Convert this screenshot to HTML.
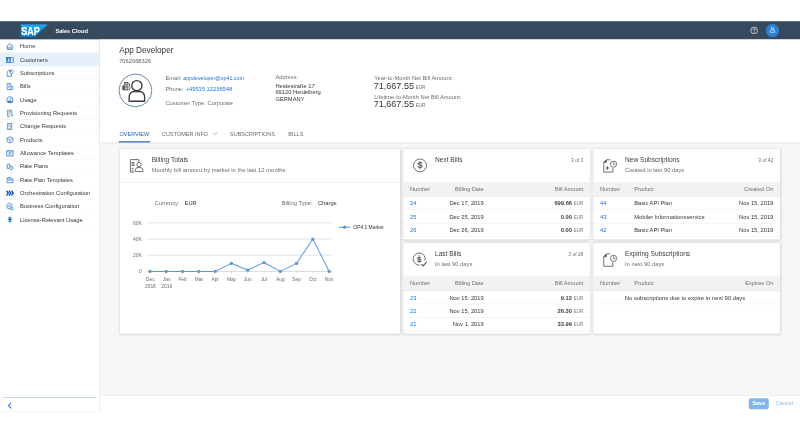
<!DOCTYPE html>
<html>
<head>
<meta charset="utf-8">
<title>SAP Sales Cloud - Customers</title>
<style>
html,body{margin:0;padding:0;background:#fff;}
body{width:800px;height:433px;overflow:hidden;position:relative;font-family:"Liberation Sans",sans-serif;}
#app{position:absolute;left:0;top:0;width:1920px;height:1040px;transform:scale(0.4166667);transform-origin:0 0;filter:grayscale(0);background:#fff;color:#32363a;font-size:13.8px;}
#app *{box-sizing:border-box;}
.abs{position:absolute;white-space:nowrap;}
/* shell */
#shell{position:absolute;left:0;top:51px;width:1920px;height:44px;background:#354a5f;}
#shell .title{position:absolute;left:133px;top:2px;height:44px;line-height:44px;color:#fff;font-weight:bold;font-size:13.6px;}
/* side nav */
#side{position:absolute;left:0;top:95px;width:240px;height:893px;background:#fff;border-right:1px solid #d9d9d9;border-bottom:1px solid #e2e2e2;}
#side .it{position:relative;height:32px;line-height:34.6px;padding-left:48px;font-size:13.8px;color:#32363a;border-bottom:1px solid #f1f1f1;white-space:nowrap;}
#side .it.sel{background:#e5f0fa;}
#side .it svg{position:absolute;left:14.2px;top:6.5px;width:19.5px;height:19.5px;}
#side .sep{position:absolute;left:7px;width:224px;top:858.6px;height:1.3px;background:#6b9cd6;}
/* main */
#main{position:absolute;left:240px;top:95px;width:1680px;height:853px;background:#f7f7f7;}
#ophead{position:absolute;left:0;top:0;width:1680px;height:247px;background:#fff;box-shadow:0 1px 3px rgba(0,0,0,0.12);}
.lbl{color:#6a6d70;}
.lnk{color:#1a74d4;}
.tab{position:absolute;top:219.3px;font-size:13.2px;color:#6a6d70;white-space:nowrap;line-height:16px;}
.tab.on{color:#1c62b0;}
.card{position:absolute;background:#fff;border-radius:4px;box-shadow:0 0 0 1px rgba(0,0,0,0.06),0 2px 7px rgba(0,0,0,0.12);overflow:hidden;}
.card .ttl{position:absolute;left:76px;top:15.5px;font-size:15.8px;line-height:19px;color:#393d41;white-space:nowrap;}
.card .sub{position:absolute;left:76px;top:43px;font-size:13.9px;line-height:16px;color:#6a6d70;white-space:nowrap;}
.card .cnt{position:absolute;right:16px;top:20px;font-size:11.8px;line-height:14px;color:#6a6d70;white-space:nowrap;}
.card .ico{position:absolute;left:16px;top:16px;width:48px;height:48px;}
.card .hline{position:absolute;left:0;right:0;top:80px;height:1px;background:#e5e5e5;}
.th{position:absolute;left:0;right:0;top:80px;height:35px;background:#f2f2f2;border-bottom:1px solid #e0e0e0;color:#6a6d70;font-size:13.6px;line-height:36px;}
.tr{position:absolute;left:0;right:0;height:32px;border-bottom:1px solid #e8e8e8;line-height:33.4px;font-size:13.85px;color:#32363a;}
.c{position:absolute;top:0;white-space:nowrap;}
.cur{font-size:11px;color:#74777a;font-weight:normal;}
.b{font-weight:bold;color:#3c3f43;}
#foot{position:absolute;left:240px;top:948px;width:1680px;height:40px;background:#fff;border-top:1px solid #d9d9d9;}
</style>
</head>
<body>
<div id="app">

<!-- SHELL HEADER -->
<div id="shell">
  <svg class="abs" style="left:49px;top:6.5px" width="66" height="32" viewBox="0 0 66 32">
    <defs><linearGradient id="sapg" x1="0" y1="0" x2="0" y2="1"><stop offset="0" stop-color="#1fb0ee"/><stop offset="1" stop-color="#0b78cf"/></linearGradient></defs><polygon points="0,0 66,0 34,31 0,31" fill="url(#sapg)"/>
    <text x="1.8" y="27" font-family="Liberation Sans, sans-serif" font-weight="bold" font-size="28" fill="#fff" textLength="44.5" lengthAdjust="spacingAndGlyphs" stroke="#fff" stroke-width="0.6">SAP</text>
  </svg>
  <div class="title">Sales Cloud</div>
  <!-- help -->
  <svg class="abs" style="left:1800px;top:12px" width="20" height="20" viewBox="0 0 20 20">
    <circle cx="10" cy="10" r="8" fill="none" stroke="#fff" stroke-width="1.6"/>
    <path d="M7.4 8.2 a2.6 2.6 0 1 1 3.6 2.3 c-0.8 0.4 -1 0.8 -1 1.7" fill="none" stroke="#fff" stroke-width="1.6"/>
    <circle cx="10" cy="14.4" r="1" fill="#fff"/>
  </svg>
  <!-- avatar -->
  <div class="abs" style="left:1838px;top:6px;width:32px;height:32px;border-radius:16px;background:#2b7fd6;"></div>
  <svg class="abs" style="left:1846px;top:12px" width="16" height="17" viewBox="0 0 18 19">
    <circle cx="9" cy="5.2" r="3.6" fill="none" stroke="#fff" stroke-width="1.7"/>
    <path d="M2.6 16.2 v-2.4 a4 4 0 0 1 4 -4 h4.8 a4 4 0 0 1 4 4 v2.4 z" fill="none" stroke="#fff" stroke-width="1.7" stroke-linejoin="round"/>
  </svg>
</div>

<!-- SIDE NAV -->
<div id="side">
  <div class="it"><svg viewBox="0 0 18 18"><path d="M1.5 9 L9 2.5 L16.5 9 M3.8 8 V15.3 H14.2 V8" fill="none" stroke="#3077c9" stroke-width="1.8" stroke-linejoin="round"/><path d="M6.5 15 v-3 a2.5 2.5 0 0 1 5 0 v3" fill="none" stroke="#3077c9" stroke-width="1.5"/></svg>Home</div>
  <div class="it sel"><svg viewBox="0 0 18 18"><rect x="1.5" y="3.5" width="15" height="11" fill="#fff" stroke="#3077c9" stroke-width="1.6"/><rect x="1.5" y="3.5" width="9.5" height="11" fill="#3077c9"/><circle cx="6.2" cy="7.6" r="1.7" fill="#fff"/><path d="M3.4 12.6 a2.9 2.9 0 0 1 5.8 0 z" fill="#fff"/><path d="M12.3 7.5 h2.8 M12.3 10.5 h2.8" stroke="#3077c9" stroke-width="1.3"/></svg>Customers</div>
  <div class="it"><svg viewBox="0 0 18 18"><path d="M3 6 V16 H12.5 V9 M3 6 L6.5 2.5 H9" fill="none" stroke="#3077c9" stroke-width="1.6" stroke-linejoin="round"/><circle cx="12.3" cy="5.8" r="4" fill="#fff" stroke="#3077c9" stroke-width="1.5"/><path d="M12.3 5.8 V1.8 A4 4 0 0 0 8.3 5.8 Z" fill="#3077c9"/></svg>Subscriptions</div>
  <div class="it"><svg viewBox="0 0 18 18"><path d="M3 2 H11 V16 H3 Z" fill="none" stroke="#3077c9" stroke-width="1.6"/><path d="M5 5.5 h4 M5 8.5 h4 M5 11.5 h3" stroke="#3077c9" stroke-width="1.3"/><path d="M11 9 h4.5 v7 h-8" fill="none" stroke="#3077c9" stroke-width="1.6"/></svg>Bills</div>
  <div class="it"><svg viewBox="0 0 18 18"><circle cx="9" cy="9" r="7" fill="none" stroke="#3077c9" stroke-width="1.7"/><path d="M9 10 L11.5 4.5" stroke="#3077c9" stroke-width="1.7"/><path d="M2.6 11 a6.8 6.8 0 0 0 12.8 0 z" fill="#3077c9"/></svg>Usage</div>
  <div class="it"><svg viewBox="0 0 18 18"><path d="M4 2 H13 V10 M9 16 H4 V2" fill="none" stroke="#3077c9" stroke-width="1.7"/><path d="M6 5.5 h5 M6 8.5 h5 M6 11.5 h3" stroke="#3077c9" stroke-width="1.3"/><path d="M10.5 13.5 h5 M13.5 11 l2.3 2.5 l-2.3 2.5" fill="none" stroke="#3077c9" stroke-width="1.5"/></svg>Provisioning Requests</div>
  <div class="it"><svg viewBox="0 0 18 18"><path d="M4 2 H13 V16 H4 Z" fill="none" stroke="#3077c9" stroke-width="1.7"/><path d="M6 5.5 h5 M6 8.5 h5" stroke="#3077c9" stroke-width="1.3"/><path d="M6.5 12.5 l1.8 1.8 l3.2 -3.6" fill="none" stroke="#3077c9" stroke-width="1.5"/></svg>Change Requests</div>
  <div class="it"><svg viewBox="0 0 18 18"><path d="M9 2 L15.5 5.5 V12.5 L9 16 L2.5 12.5 V5.5 Z" fill="none" stroke="#3077c9" stroke-width="1.7" stroke-linejoin="round"/><path d="M2.5 5.5 L9 9 L15.5 5.5 M9 9 V16" fill="none" stroke="#3077c9" stroke-width="1.4"/></svg>Products</div>
  <div class="it"><svg viewBox="0 0 18 18"><rect x="2" y="3.5" width="14" height="11.5" fill="none" stroke="#3077c9" stroke-width="1.7"/><path d="M6 12 l3 -5 l3 5 M7 10.4 h4" fill="none" stroke="#3077c9" stroke-width="1.4"/><path d="M2 6 h14" stroke="#3077c9" stroke-width="1.2"/></svg>Allowance Templates</div>
  <div class="it"><svg viewBox="0 0 18 18"><path d="M3 4 H9 V9 M3 4 V13 H7" fill="none" stroke="#3077c9" stroke-width="1.7"/><circle cx="11.5" cy="12" r="4" fill="none" stroke="#3077c9" stroke-width="1.6"/><path d="M11.5 10 v2.2 h1.8" fill="none" stroke="#3077c9" stroke-width="1.2"/></svg>Rate Plans</div>
  <div class="it"><svg viewBox="0 0 18 18"><path d="M2.5 7 H15.5 V15.5 H2.5 Z" fill="none" stroke="#3077c9" stroke-width="1.7"/><path d="M4 7 V3.5 H11 L14 7" fill="none" stroke="#3077c9" stroke-width="1.6"/><path d="M5 10 h8" stroke="#3077c9" stroke-width="1.3"/></svg>Rate Plan Templates</div>
  <div class="it"><svg viewBox="0 0 18 18"><path d="M1.5 3.5 l4 5.5 l-4 5.5 M7 3.5 l4 5.5 l-4 5.5 M12.5 3.5 l4 5.5 l-4 5.5" fill="none" stroke="#0f56ad" stroke-width="3"/></svg>Orchestration Configuration</div>
  <div class="it"><svg viewBox="0 0 18 18"><circle cx="8" cy="8" r="6" fill="none" stroke="#3077c9" stroke-width="1.7"/><circle cx="8" cy="8" r="2" fill="none" stroke="#3077c9" stroke-width="1.4"/><path d="M10 12 h6 v4.5 h-6 z" fill="#fff" stroke="#3077c9" stroke-width="1.4"/></svg>Business Configuration</div>
  <div class="it"><svg viewBox="0 0 18 18"><path d="M9 1.5 V16.5 M5 4 h8 M4 8 h10 M5 12 h8" stroke="#3077c9" stroke-width="1.7"/><circle cx="9" cy="8" r="3" fill="#3077c9"/></svg>License-Relevant Usage</div>
  <div class="sep"></div>
  <svg class="abs" style="left:16px;top:868px" width="16" height="20" viewBox="0 0 16 20"><path d="M11 3 L4.5 10 L11 17" fill="none" stroke="#3077c9" stroke-width="2.6"/></svg>
</div>

<!-- MAIN -->
<div id="main">
  <div id="ophead">
    <div class="abs" style="left:46px;top:12.5px;font-size:19.7px;line-height:24px;color:#32363a;">App Developer</div>
    <div class="abs" style="left:46px;top:43px;font-size:13.8px;line-height:16px;color:#55585b;">7062068326</div>
    <!-- avatar -->
    <svg class="abs" style="left:43.5px;top:81px;overflow:visible" width="82" height="82" viewBox="-1 -1 82 82">
      <circle cx="40" cy="40" r="39.3" fill="#fff" stroke="#56789a" stroke-width="2.1"/>
      <circle cx="43.4" cy="28.6" r="12.2" fill="none" stroke="#3a3a3a" stroke-width="3.2"/>
      <path d="M25 66 V54.5 a12 12 0 0 1 12 -12 h13 a12 12 0 0 1 12 12 V66 Z" fill="#fff" stroke="#3a3a3a" stroke-width="3.2" stroke-linejoin="round"/>
      <rect x="14" y="21" width="8" height="18" fill="#c4c4c4" stroke="#4a4a4a" stroke-width="1.8"/>
      <rect x="8.4" y="28" width="5.6" height="11.4" fill="#5a5a5a"/>
      <path d="M16 25 h4 M16 29 h4 M16 33 h4" stroke="#4a4a4a" stroke-width="1.6"/>
      <path d="M24.5 22 q3.5 9 1.5 17.5" fill="none" stroke="#4a4a4a" stroke-width="2"/>
    </svg>
    <div class="abs lbl" style="left:157px;top:85px;line-height:16px;">Email: <span class="lnk" style="font-size:12.7px;margin-left:0.5px">appdeveloper@op41.com</span></div>
    <div class="abs lbl" style="left:157px;top:111px;line-height:16px;">Phone: <span class="lnk" style="margin-left:1px">+49515 12236548</span></div>
    <div class="abs lbl" style="left:157px;top:144px;line-height:16px;">Customer Type: Corporate</div>

    <div class="abs lbl" style="left:421px;top:83px;line-height:16px;">Address:</div>
    <div class="abs" style="left:421px;top:103.2px;line-height:16px;color:#32363a;">Heidestraße 17<br>69120 Heidelberg<br>GERMANY</div>

    <div class="abs lbl" style="left:658px;top:85px;line-height:16px;">Year-to-Month Net Bill Amount:</div>
    <div class="abs" style="left:657px;top:98.6px;line-height:26px;font-size:21.7px;color:#32363a;">71,667.55 <span style="font-size:11px;color:#6a6d70;margin-left:-2px">EUR</span></div>
    <div class="abs lbl" style="left:658px;top:129.5px;line-height:16px;">Lifetime-to-Month Net Bill Amount:</div>
    <div class="abs" style="left:657px;top:141.7px;line-height:26px;font-size:21.7px;color:#32363a;">71,667.55 <span style="font-size:11px;color:#6a6d70;margin-left:-2px">EUR</span></div>

    <div class="tab on" style="left:47px;">OVERVIEW</div>
    <div class="abs" style="left:45px;top:244.3px;width:75px;height:2.8px;background:#2a6cb8;"></div>
    <div class="tab" style="left:149px;">CUSTOMER INFO</div>
    <svg class="abs" style="left:271px;top:221px" width="12" height="10" viewBox="0 0 12 10"><path d="M1.5 2.5 L6 7 L10.5 2.5" fill="none" stroke="#6a6d70" stroke-width="1.4"/></svg>
    <div class="tab" style="left:312px;">SUBSCRIPTIONS</div>
    <div class="tab" style="left:452px;">BILLS</div>
  </div>

  <!-- CARD 1 : Billing Totals -->
  <div class="card" style="left:48px;top:262px;width:672px;height:444px;">
    <svg class="ico" viewBox="0 0 48 48">
      <path d="M9 10 H29 V16 M9 10 V40 H18.5" fill="none" stroke="#555" stroke-width="2"/>
      <text x="11" y="25" font-family="Liberation Sans, sans-serif" font-size="15" fill="#555" font-weight="bold">$</text>
      <path d="M11.8 31.5 h5 M11.8 36 h4.5" stroke="#555" stroke-width="1.9"/>
      <circle cx="29.8" cy="21.8" r="5.2" fill="#fff" stroke="#555" stroke-width="2"/>
      <path d="M21 38.8 v-3.6 a6.2 6.2 0 0 1 6.2 -6.2 h5.4 a6.2 6.2 0 0 1 6.2 6.2 v3.6 z" fill="#fff" stroke="#555" stroke-width="2" stroke-linejoin="round"/>
    </svg>
    <div class="ttl">Billing Totals</div>
    <div class="sub" style="font-size:14.1px">Monthly bill amount by market in the last 12 months</div>
    <div class="hline"></div>

    <div class="abs lbl" style="left:83px;top:123px;line-height:16px;">Currency:</div>
    <div class="abs" style="left:155px;top:123px;line-height:16px;">EUR</div>
    <div class="abs lbl" style="left:388px;top:123px;line-height:16px;">Billing Type:</div>
    <div class="abs" style="left:475px;top:123px;line-height:16px;">Charge</div>

    <svg class="abs" style="left:0;top:155.2px" width="672" height="288" viewBox="0 0 672 288">
      <g stroke="#c6ced8" stroke-width="1.3">
      <line x1="64.5" y1="22.8" x2="509" y2="22.8"/>
      <line x1="64.5" y1="61.7" x2="509" y2="61.7"/>
      <line x1="64.5" y1="100.5" x2="509" y2="100.5"/>
      <line x1="64.5" y1="139.4" x2="509" y2="139.4" stroke="#b3bcc6"/>
      </g>
      <g font-family="Liberation Sans, sans-serif" font-size="11.8" fill="#6a6d70" text-anchor="end">
      <text x="52" y="27.0">60K</text>
      <text x="52" y="65.9">40K</text>
      <text x="52" y="104.7">20K</text>
      <text x="52" y="143.6">0</text>
      </g>
      <g stroke="#b3bcc6" stroke-width="1">
      <line x1="72.0" y1="139.4" x2="72.0" y2="144.4"/>
      <line x1="111.1" y1="139.4" x2="111.1" y2="144.4"/>
      <line x1="150.2" y1="139.4" x2="150.2" y2="144.4"/>
      <line x1="189.3" y1="139.4" x2="189.3" y2="144.4"/>
      <line x1="228.4" y1="139.4" x2="228.4" y2="144.4"/>
      <line x1="267.5" y1="139.4" x2="267.5" y2="144.4"/>
      <line x1="306.5" y1="139.4" x2="306.5" y2="144.4"/>
      <line x1="345.6" y1="139.4" x2="345.6" y2="144.4"/>
      <line x1="384.7" y1="139.4" x2="384.7" y2="144.4"/>
      <line x1="423.8" y1="139.4" x2="423.8" y2="144.4"/>
      <line x1="462.9" y1="139.4" x2="462.9" y2="144.4"/>
      <line x1="502.0" y1="139.4" x2="502.0" y2="144.4"/>
      </g>
      <polyline fill="none" stroke="#5899da" stroke-width="2.4" stroke-linejoin="round" points="72.0,139.4 111.1,139.4 150.2,139.4 189.3,139.4 228.4,139.4 267.5,120.0 306.5,136.5 345.6,118.0 384.7,139.4 423.8,120.0 462.9,61.7 502.0,139.4"/>
      <g fill="#5899da"><circle cx="72.0" cy="139.4" r="3.9"/><circle cx="111.1" cy="139.4" r="3.9"/><circle cx="150.2" cy="139.4" r="3.9"/><circle cx="189.3" cy="139.4" r="3.9"/><circle cx="228.4" cy="139.4" r="3.9"/><circle cx="267.5" cy="120.0" r="3.9"/><circle cx="306.5" cy="136.5" r="3.9"/><circle cx="345.6" cy="118.0" r="3.9"/><circle cx="384.7" cy="139.4" r="3.9"/><circle cx="423.8" cy="120.0" r="3.9"/><circle cx="462.9" cy="61.7" r="3.9"/><circle cx="502.0" cy="139.4" r="3.9"/></g>
      <g font-family="Liberation Sans, sans-serif" font-size="11.6" fill="#6a6d70" text-anchor="middle">
      <text x="73.0" y="162.3">Dec</text>
      <text x="112.1" y="162.3">Jan</text>
      <text x="150.2" y="162.3">Feb</text>
      <text x="189.3" y="162.3">Mar</text>
      <text x="228.4" y="162.3">Apr</text>
      <text x="267.5" y="162.3">May</text>
      <text x="306.5" y="162.3">Jun</text>
      <text x="345.6" y="162.3">Jul</text>
      <text x="384.7" y="162.3">Aug</text>
      <text x="423.8" y="162.3">Sep</text>
      <text x="462.9" y="162.3">Oct</text>
      <text x="502.0" y="162.3">Nov</text>
      <text x="73.0" y="178.5">2018</text><text x="112.1" y="178.5">2019</text>
      </g>
      <line x1="525" y1="33.3" x2="553" y2="33.3" stroke="#5899da" stroke-width="2.4"/>
      <circle cx="539" cy="33.3" r="3.9" fill="#5899da"/>
      <text x="560" y="37.5" font-family="Liberation Sans, sans-serif" font-size="11.8" fill="#32363a">OP4.1 Market</text>
      </svg>
  </div>

  <!-- CARD 2a : Next Bills -->
  <div class="card" style="left:728px;top:262px;width:448px;height:218px;">
    <svg class="ico" viewBox="0 0 48 48">
      <circle cx="24" cy="24" r="15.5" fill="none" stroke="#555" stroke-width="2"/>
      <text x="24" y="31" text-anchor="middle" font-family="Liberation Sans, sans-serif" font-size="20" font-weight="bold" fill="#555">S</text><path d="M24 14 V34" stroke="#555" stroke-width="1.8"/>
    </svg>
    <div class="ttl">Next Bills</div>
    <div class="cnt">3 of 3</div>
    <div class="th"><span class="c" style="left:16px">Number</span><span class="c" style="right:255px">Billing Date</span><span class="c" style="right:16px">Bill Amount</span></div>
    <div class="tr" style="top:115px"><span class="c lnk" style="left:16px">24</span><span class="c" style="right:255px">Dec 17, 2019</span><span class="c" style="right:16px"><span class="b">699.66</span> <span class="cur">EUR</span></span></div>
    <div class="tr" style="top:147px"><span class="c lnk" style="left:16px">25</span><span class="c" style="right:255px">Dec 25, 2019</span><span class="c" style="right:16px"><span class="b">0.00</span> <span class="cur">EUR</span></span></div>
    <div class="tr" style="top:179px"><span class="c lnk" style="left:16px">26</span><span class="c" style="right:255px">Dec 26, 2019</span><span class="c" style="right:16px"><span class="b">0.00</span> <span class="cur">EUR</span></span></div>
  </div>

  <!-- CARD 2b : Last Bills -->
  <div class="card" style="left:728px;top:488px;width:448px;height:218px;">
    <svg class="ico" viewBox="0.5 1.3 48 48">
      <path d="M36.5 28 A14.5 14.5 0 1 0 24 38.5" fill="none" stroke="#555" stroke-width="2"/>
      <text x="22.5" y="30" text-anchor="middle" font-family="Liberation Sans, sans-serif" font-size="18" font-weight="bold" fill="#555">S</text><path d="M22.5 14 V33.5" stroke="#555" stroke-width="1.8"/>
      <path d="M27.5 36 l4.5 4.5 l8.5 -9.5" fill="none" stroke="#555" stroke-width="2.6"/>
    </svg>
    <div class="ttl">Last Bills</div>
    <div class="sub">In last 90 days</div>
    <div class="cnt">3 of 18</div>
    <div class="th"><span class="c" style="left:16px">Number</span><span class="c" style="right:255px">Billing Date</span><span class="c" style="right:16px">Bill Amount</span></div>
    <div class="tr" style="top:115px"><span class="c lnk" style="left:16px">23</span><span class="c" style="right:255px">Nov 15, 2019</span><span class="c" style="right:16px"><span class="b">9.12</span> <span class="cur">EUR</span></span></div>
    <div class="tr" style="top:147px"><span class="c lnk" style="left:16px">22</span><span class="c" style="right:255px">Nov 15, 2019</span><span class="c" style="right:16px"><span class="b">26.30</span> <span class="cur">EUR</span></span></div>
    <div class="tr" style="top:179px"><span class="c lnk" style="left:16px">21</span><span class="c" style="right:255px">Nov 1, 2019</span><span class="c" style="right:16px"><span class="b">33.99</span> <span class="cur">EUR</span></span></div>
  </div>

  <!-- CARD 3a : New Subscriptions -->
  <div class="card" style="left:1184px;top:262px;width:448px;height:218px;">
    <svg class="ico" viewBox="0 0 48 48">
      <path d="M25 10.5 H15.5 L9 17 V40 H31 V30" fill="none" stroke="#555" stroke-width="2" stroke-linejoin="round"/>
      <path d="M15.5 10.5 V17 H9 Z" fill="#555" stroke="#555" stroke-width="1.2"/>
      <circle cx="32.5" cy="21" r="7.4" fill="#fff" stroke="#555" stroke-width="2"/>
      <path d="M32.3 16.5 v5 h4.2" fill="none" stroke="#555" stroke-width="1.9"/>
      <path d="M13.8 30.2 h8 M17.8 26.2 v8" stroke="#555" stroke-width="2.6"/>
    </svg>
    <div class="ttl">New Subscriptions</div>
    <div class="sub">Created in last 90 days</div>
    <div class="cnt">3 of 42</div>
    <div class="th"><span class="c" style="left:16px">Number</span><span class="c" style="left:98px">Product</span><span class="c" style="right:16px">Created On</span></div>
    <div class="tr" style="top:115px"><span class="c lnk" style="left:16px">44</span><span class="c" style="left:98px">Basic API Plan</span><span class="c" style="right:16px">Nov 15, 2019</span></div>
    <div class="tr" style="top:147px"><span class="c lnk" style="left:16px">43</span><span class="c" style="left:98px">Mobiler Informationsservice</span><span class="c" style="right:16px">Nov 15, 2019</span></div>
    <div class="tr" style="top:179px"><span class="c lnk" style="left:16px">42</span><span class="c" style="left:98px">Basic API Plan</span><span class="c" style="right:16px">Nov 15, 2019</span></div>
  </div>

  <!-- CARD 3b : Expiring Subscriptions -->
  <div class="card" style="left:1184px;top:488px;width:448px;height:218px;">
    <svg class="ico" viewBox="0 0 48 48">
      <path d="M25 10.5 H15.5 L9 17 V40 H31 V30" fill="none" stroke="#555" stroke-width="2" stroke-linejoin="round"/>
      <path d="M15.5 10.5 V17 H9 Z" fill="#555" stroke="#555" stroke-width="1.2"/>
      <circle cx="32.5" cy="21" r="7.4" fill="#fff" stroke="#555" stroke-width="2"/>
      <path d="M32.3 16.5 v5 h4.2" fill="none" stroke="#555" stroke-width="1.9"/>
    </svg>
    <div class="ttl">Expiring Subscriptions</div>
    <div class="sub">In next 90 days</div>
    <div class="th"><span class="c" style="left:16px">Number</span><span class="c" style="left:98px">Product</span><span class="c" style="right:16px">Expires On</span></div>
    <div class="tr" style="top:115px;text-align:center;padding-right:8px;font-size:14.15px;">No subscriptions due to expire in next 90 days</div>
  </div>
</div>

<!-- FOOTER -->
<div id="foot">
  <div class="abs" style="left:1557px;top:7px;width:48px;height:26px;border-radius:4px;background:#84b6e8;color:#fff;font-weight:bold;font-size:13.4px;line-height:26px;text-align:center;">Save</div>
  <div class="abs" style="left:1621px;top:7px;height:26px;line-height:26px;font-size:13.6px;color:#8fb9e8;">Cancel</div>
</div>
<div class="abs" style="left:0;top:988px;width:1920px;height:52px;background:#fff;"></div>

</div>
</body>
</html>
